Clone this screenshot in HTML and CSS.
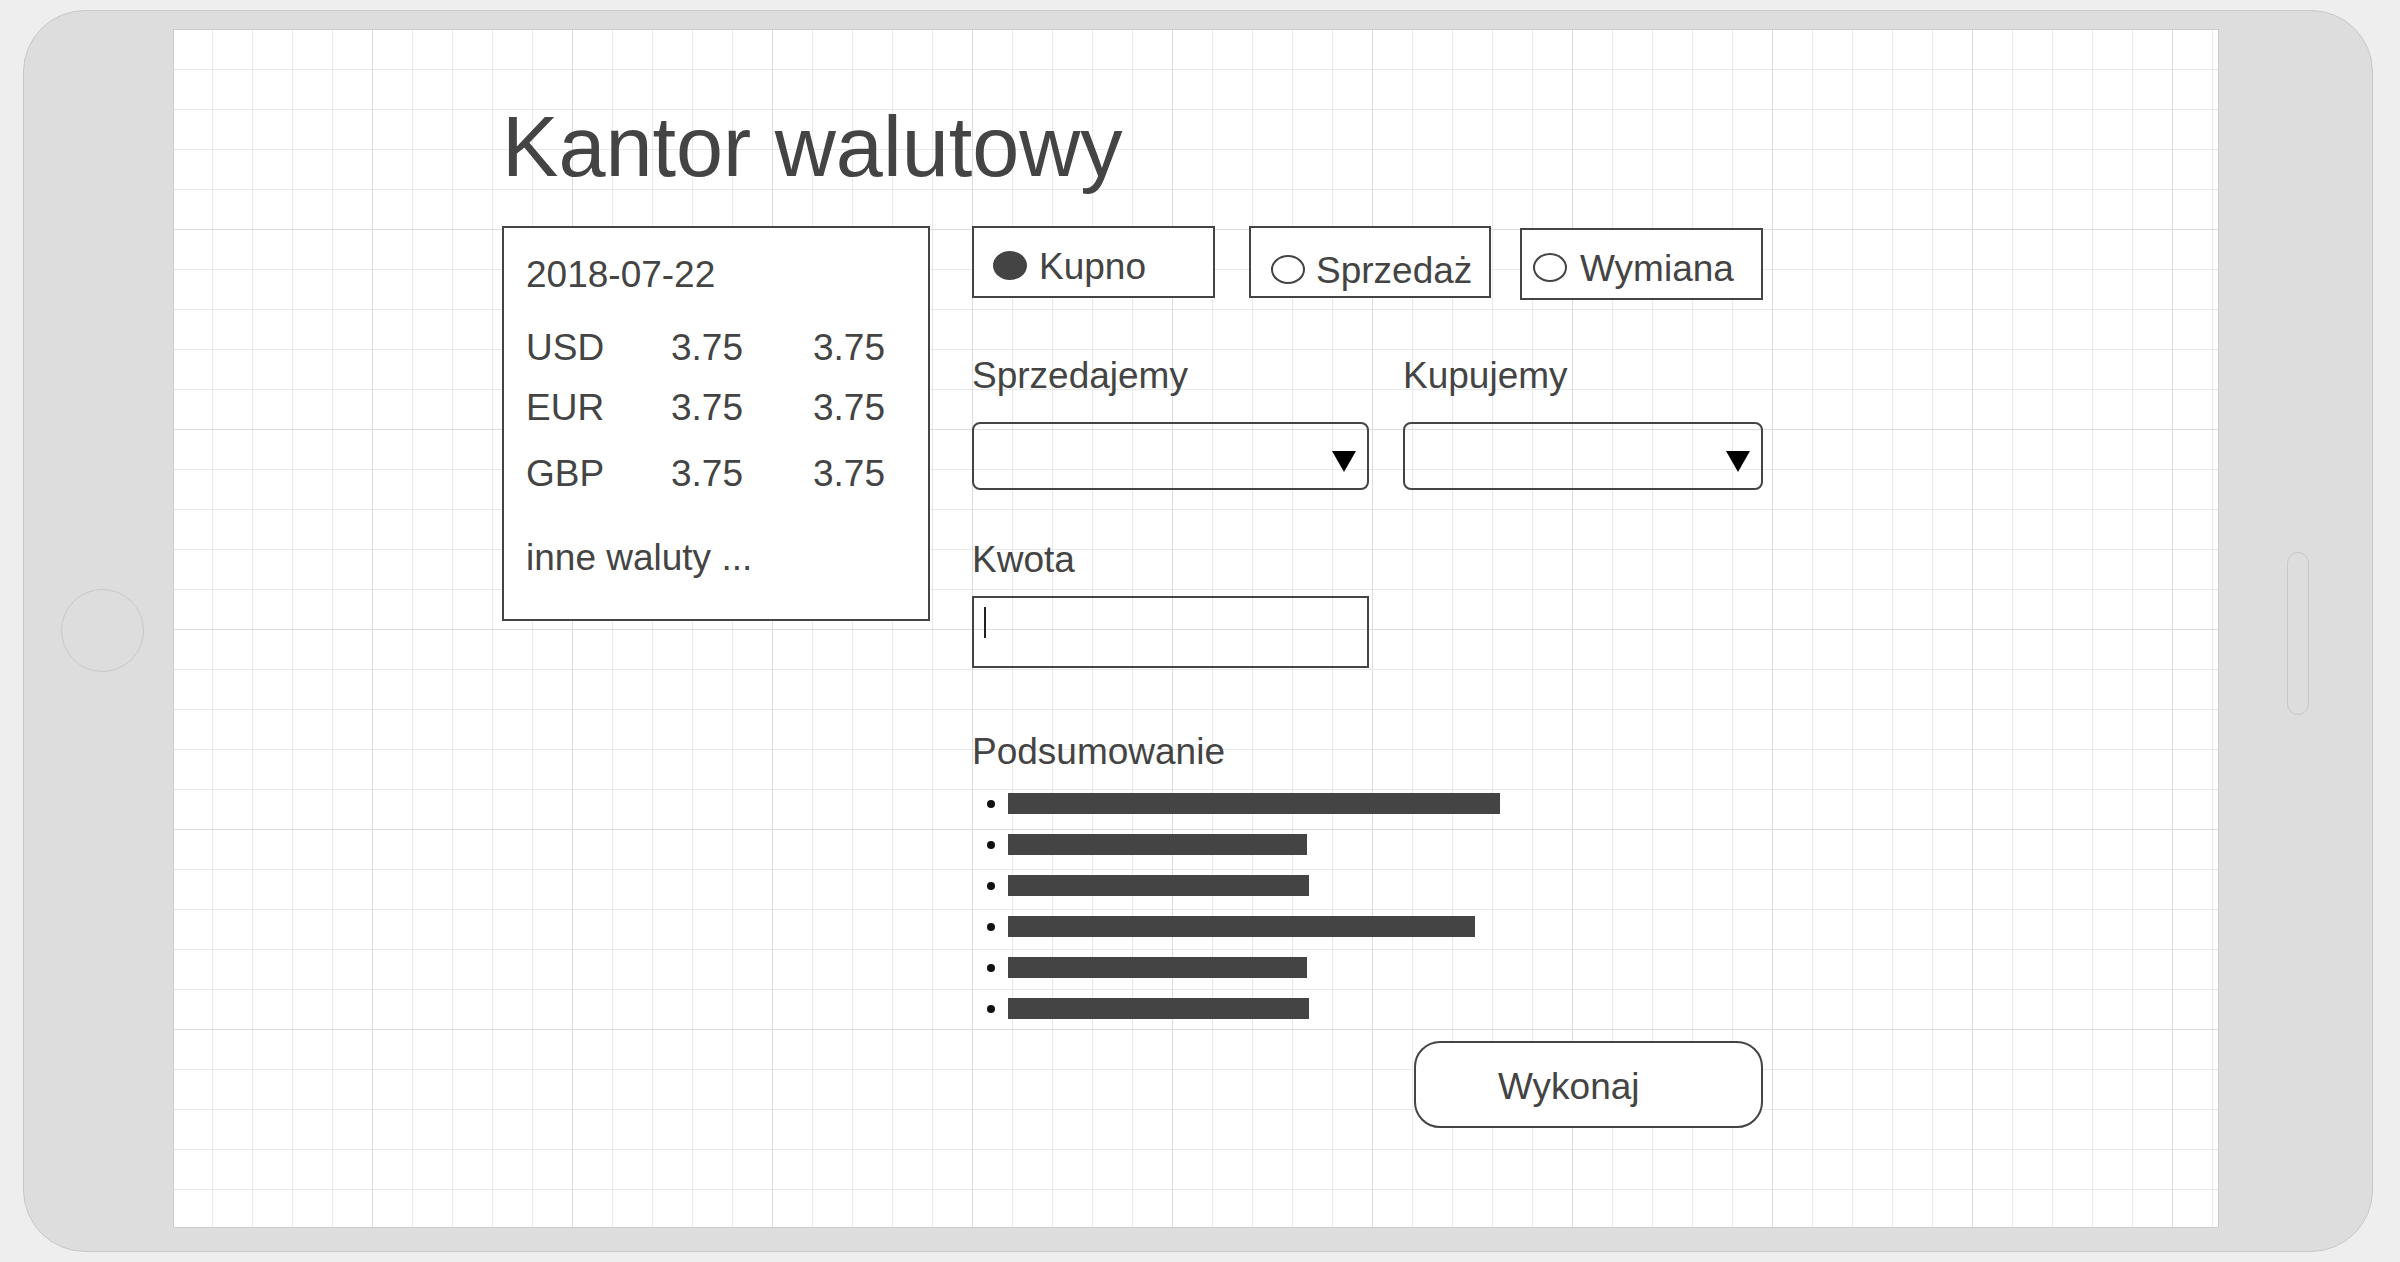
FILE: index.html
```html
<!DOCTYPE html>
<html lang="pl">
<head>
<meta charset="utf-8">
<title>Kantor walutowy</title>
<link rel="stylesheet" href="styles.css">
</head>
<body>
<div class="device">
  <div class="bezel bezel-left"><div class="home-button"></div></div>
  <div class="screen">
    <div class="content">
      <h1 class="title">Kantor walutowy</h1>
      <div class="main-row">
        <div class="rates">
          <div class="rates-date">2018-07-22</div>
          <div class="rate-row"><span>USD</span><span>3.75</span><span>3.75</span></div>
          <div class="rate-row"><span>EUR</span><span>3.75</span><span>3.75</span></div>
          <div class="rate-row"><span>GBP</span><span>3.75</span><span>3.75</span></div>
          <div class="rates-more">inne waluty ...</div>
        </div>
        <div class="form">
          <div class="radios">
            <div class="radio radio-kupno"><span class="radio-dot is-checked"></span><span class="radio-label">Kupno</span></div>
            <div class="radio radio-sprzedaz"><span class="radio-dot"></span><span class="radio-label">Sprzedaż</span></div>
            <div class="radio radio-wymiana"><span class="radio-dot"></span><span class="radio-label">Wymiana</span></div>
          </div>
          <div class="fields">
            <div class="field-label">Sprzedajemy</div>
            <div class="field-label">Kupujemy</div>
            <div class="select"><svg class="select-arrow" width="24" height="21" viewBox="0 0 24 21"><polygon points="0,0 24,0 12,21" fill="#000"/></svg></div>
            <div class="select"><svg class="select-arrow" width="24" height="21" viewBox="0 0 24 21"><polygon points="0,0 24,0 12,21" fill="#000"/></svg></div>
          </div>
          <div class="field-label kwota-label">Kwota</div>
          <div class="text-input"><span class="caret"></span></div>
          <div class="summary-title">Podsumowanie</div>
          <ul class="summary-list">
            <li><span class="bar" style="width:492px"></span></li>
            <li><span class="bar" style="width:299px"></span></li>
            <li><span class="bar" style="width:301px"></span></li>
            <li><span class="bar" style="width:467px"></span></li>
            <li><span class="bar" style="width:299px"></span></li>
            <li><span class="bar" style="width:301px"></span></li>
          </ul>
          <div class="actions"><div class="button">Wykonaj</div></div>
        </div>
      </div>
    </div>
  </div>
  <div class="bezel bezel-right"><div class="side-pill"></div></div>
</div>
</body>
</html>
```

FILE: styles.css
```css
html, body {
  margin: 0;
  padding: 0;
}

body {
  background: #eeeeee;
  font-family: "Liberation Sans", Arial, sans-serif;
  color: #444444;
  width: 2400px;
  height: 1262px;
  overflow: hidden;
}

.device {
  box-sizing: border-box;
  width: 2350px;
  height: 1242px;
  margin: 10px 0 0 23px;
  padding: 18px 0 23px 0;
  background: #dddddd;
  border: 1px solid #c8c8c8;
  border-radius: 62px;
  display: flex;
}

.bezel {
  flex: none;
  display: flex;
}

.bezel-left {
  width: 149px;
  align-items: center;
}

.home-button {
  box-sizing: border-box;
  width: 83px;
  height: 83px;
  margin: 4px 0 0 37px;
  border: 1px solid #c8c8c8;
  border-radius: 50%;
}

.bezel-right {
  width: 153px;
  align-items: flex-start;
}

.side-pill {
  box-sizing: border-box;
  width: 22px;
  height: 163px;
  margin: 523px 0 0 68px;
  border: 1px solid #c8c8c8;
  border-radius: 11px;
}

.screen {
  box-sizing: border-box;
  flex: none;
  width: 2046px;
  height: 1199px;
  border: 1px solid #cccccc;
  background-color: #ffffff;
  background-image:
    linear-gradient(to right, transparent 199px, #dcdcdc 199px),
    linear-gradient(to bottom, transparent 199px, #dcdcdc 199px),
    linear-gradient(to right, transparent 39px, #e9e9e9 39px),
    linear-gradient(to bottom, transparent 39px, #e9e9e9 39px);
  background-size: 200px 100%, 100% 200px, 40px 100%, 100% 40px;
  background-position: -1px 0, 0 0, -1px 0, 0 0;
  overflow: hidden;
}

.content {
  padding: 75px 0 0 328px;
}

.title {
  margin: 0 0 37px 0;
  font-size: 84.6px;
  line-height: 84px;
  font-weight: normal;
  color: #444444;
}

.main-row {
  display: flex;
  align-items: flex-start;
  gap: 42px;
  font-size: 37px;
  line-height: 40px;
}

/* rates box */
.rates {
  box-sizing: border-box;
  width: 428px;
  height: 395px;
  flex: none;
  border: 2px solid #444444;
  background: #ffffff;
  padding: 27px 0 0 22px;
}

.rate-row {
  display: grid;
  grid-template-columns: 145px 142px auto;
  margin-top: 20px;
}

.rates-date + .rate-row {
  margin-top: 33px;
}

.rate-row:nth-child(4) {
  margin-top: 26px;
}

.rates-more {
  margin-top: 44px;
}

/* form column */
.form {
  width: 791px;
  flex: none;
}

.radios {
  display: flex;
  align-items: flex-start;
}

.radio {
  box-sizing: border-box;
  width: 243px;
  height: 72px;
  border: 2px solid #444444;
  background: #ffffff;
  display: flex;
  align-items: flex-start;
  gap: 12px;
  padding-left: 19px;
}

.radio-kupno {
  margin-right: 34px;
}

.radio-sprzedaz {
  width: 242px;
  margin-right: 29px;
  padding-top: 4px;
  padding-left: 20px;
  gap: 11px;
}

.radio-wymiana {
  margin-top: 2px;
  padding-left: 11px;
  gap: 13px;
}

.radio-dot {
  box-sizing: border-box;
  width: 34px;
  height: 29px;
  flex: none;
  margin-top: 23px;
  border: 2px solid #444444;
  border-radius: 50%;
  background: #ffffff;
}

.radio-dot.is-checked {
  background: #444444;
}

.radio-label {
  margin-top: 19px;
}

.fields {
  display: grid;
  grid-template-columns: 397px 360px;
  column-gap: 34px;
  row-gap: 26px;
  margin-top: 56px;
}

.select {
  box-sizing: border-box;
  height: 68px;
  border: 2px solid #444444;
  border-radius: 8px;
  display: flex;
  justify-content: flex-end;
  align-items: flex-start;
  padding: 27px 11px 0 0;
}

.select-arrow {
  display: block;
}

.kwota-label {
  margin-top: 50px;
}

.text-input {
  box-sizing: border-box;
  width: 397px;
  height: 72px;
  margin-top: 16px;
  border: 2px solid #444444;
  padding: 9px 10px;
  display: flex;
  align-items: flex-start;
}

.caret {
  width: 2px;
  height: 31px;
  background: #222222;
}

.summary-title {
  margin-top: 64px;
}

.summary-list {
  list-style: none;
  margin: 21px 0 0 0;
  padding: 0;
}

.summary-list li {
  display: flex;
  align-items: center;
  height: 21px;
  margin-bottom: 20px;
}

.summary-list li:last-child {
  margin-bottom: 0;
}

.summary-list li::before {
  content: "";
  width: 8px;
  height: 8px;
  border-radius: 50%;
  background: #111111;
  margin: 0 13px 0 15px;
  flex: none;
}

.bar {
  display: block;
  height: 21px;
  background: #444444;
}

.actions {
  display: flex;
  justify-content: flex-end;
  margin-top: 22px;
}

.button {
  box-sizing: border-box;
  width: 349px;
  height: 87px;
  border: 2px solid #444444;
  border-radius: 26px;
  background: #ffffff;
  display: flex;
  align-items: center;
  padding: 4px 0 0 82px;
}
```
